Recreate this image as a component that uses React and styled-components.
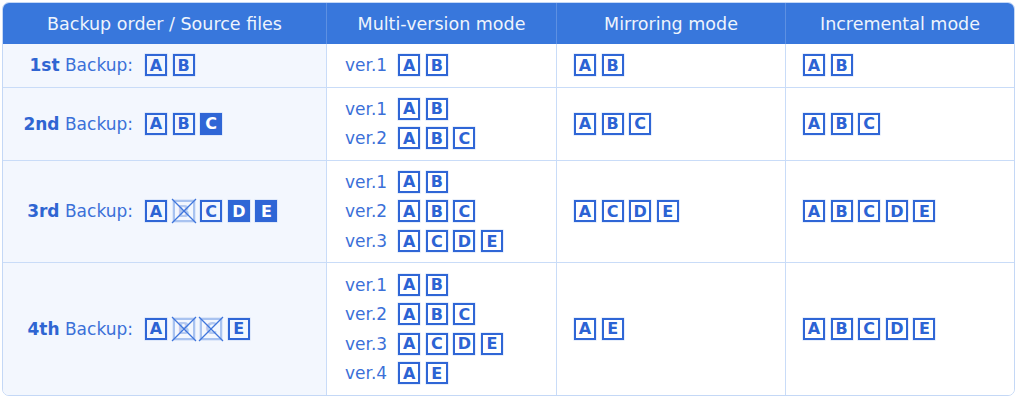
import styled, { createGlobalStyle } from "styled-components";

const GlobalStyle = createGlobalStyle`
    body {
        margin: 0;
        background: #ffffff;
        font-family: "DejaVu Sans", Verdana, sans-serif;
    }
`

const backups = [
    {
        ordinal: '1st',
        source: [{ l: 'A' }, { l: 'B' }],
        versions: [['A', 'B']],
        mirror: ['A', 'B'],
        incremental: ['A', 'B'],
    },
    {
        ordinal: '2nd',
        source: [{ l: 'A' }, { l: 'B' }, { l: 'C', state: 'new' }],
        versions: [['A', 'B'], ['A', 'B', 'C']],
        mirror: ['A', 'B', 'C'],
        incremental: ['A', 'B', 'C'],
    },
    {
        ordinal: '3rd',
        source: [{ l: 'A' }, { l: 'B', state: 'deleted' }, { l: 'C' }, { l: 'D', state: 'new' }, { l: 'E', state: 'new' }],
        versions: [['A', 'B'], ['A', 'B', 'C'], ['A', 'C', 'D', 'E']],
        mirror: ['A', 'C', 'D', 'E'],
        incremental: ['A', 'B', 'C', 'D', 'E'],
    },
    {
        ordinal: '4th',
        source: [{ l: 'A' }, { l: 'B', state: 'deleted' }, { l: 'C', state: 'deleted' }, { l: 'E' }],
        versions: [['A', 'B'], ['A', 'B', 'C'], ['A', 'C', 'D', 'E'], ['A', 'E']],
        mirror: ['A', 'E'],
        incremental: ['A', 'B', 'C', 'D', 'E'],
    },
]

const FileBox = ({ letter, state }) => (
    <Box $state={state}>
        {letter}
        {state === 'deleted' && (
            <Cross viewBox="0 0 26 26" width="26" height="26">
                <line x1="1" y1="1" x2="25" y2="25" stroke="#4076dc" strokeWidth="1.3" />
                <line x1="25" y1="1" x2="1" y2="25" stroke="#4076dc" strokeWidth="1.3" />
            </Cross>
        )}
    </Box>
)

const Files = ({ list }) => (
    <BoxRow>
        {list.map((f, i) =>
            typeof f === 'string'
                ? <FileBox key={i} letter={f} />
                : <FileBox key={i} letter={f.l} state={f.state} />
        )}
    </BoxRow>
)

const App = () => {
    return (
        <>
            <GlobalStyle />
            <Table>
                <HeadCell>Backup order / Source files</HeadCell>
                <HeadCell $sep>Multi-version mode</HeadCell>
                <HeadCell $sep>Mirroring mode</HeadCell>
                <HeadCell $sep>Incremental mode</HeadCell>

                {backups.map((b, r) => (
                    <Row key={b.ordinal}>
                        <OrderCell $top={r > 0}>
                            <Label><strong>{b.ordinal}</strong> Backup:</Label>
                            <Files list={b.source} />
                        </OrderCell>
                        <Cell $top={r > 0} $pad="18px">
                            <Versions>
                                {b.versions.map((v, i) => (
                                    <VersionLine key={i}>
                                        <VerText>ver.{i + 1}</VerText>
                                        <Files list={v} />
                                    </VersionLine>
                                ))}
                            </Versions>
                        </Cell>
                        <Cell $top={r > 0} $pad="17px">
                            <Files list={b.mirror} />
                        </Cell>
                        <Cell $top={r > 0} $pad="17px">
                            <Files list={b.incremental} />
                        </Cell>
                    </Row>
                ))}
            </Table>
        </>
    )
}

const Table = styled.div`
    margin: 2px;
    width: 1013px;
    box-sizing: border-box;
    border: 1px solid #c4d8f6;
    border-radius: 7px;
    overflow: hidden;
    display: grid;
    grid-template-columns: 323px 230px 229px 229px;
`

const HeadCell = styled.div`
    box-sizing: border-box;
    height: 41px;
    background: #3877dc;
    color: #eef4fd;
    font-size: 17.5px;
    display: flex;
    align-items: center;
    justify-content: center;
    border-left: ${p => p.$sep ? '1px solid #5d90e2' : 'none'};
`

const Row = styled.div`
    display: contents;
`

const Cell = styled.div`
    box-sizing: border-box;
    display: flex;
    align-items: center;
    padding: 10.25px 0 10.25px ${p => p.$pad};
    border-left: 1px solid #c9dcf8;
    border-top: ${p => p.$top ? '1px solid #c9dcf8' : 'none'};
    background: #ffffff;
`

const OrderCell = styled(Cell)`
    border-left: none;
    background: #f3f7fe;
    padding-left: 20px;
    gap: 12px;
`

const Label = styled.span`
    width: 110px;
    text-align: right;
    font-size: 17px;
    color: #3b70d8;
    white-space: nowrap;

    strong {
        color: #2f65d2;
        font-weight: 700;
    }
`

const Versions = styled.div`
    display: flex;
    flex-direction: column;
    gap: 7.6px;
`

const VersionLine = styled.div`
    display: flex;
    align-items: center;
    gap: 11px;
`

const VerText = styled.span`
    font-size: 17px;
    color: #3b70d8;
    white-space: nowrap;
`

const BoxRow = styled.div`
    display: flex;
    align-items: center;
    gap: 5.6px;
`

const Box = styled.span`
    position: relative;
    box-sizing: border-box;
    width: 22px;
    height: 22px;
    display: flex;
    align-items: center;
    justify-content: center;
    font-size: 16px;
    font-weight: 700;
    line-height: 1;
    padding-top: 1px;
    border: 2px solid ${p => p.$state === 'deleted' ? '#a9c3f0' : '#2f66d6'};
    background: ${p => p.$state === 'new' ? '#2f66d6' : 'transparent'};
    color: ${p => p.$state === 'new' ? '#ffffff' : p.$state === 'deleted' ? '#b4c9f0' : '#2c63d4'};
    box-shadow: 0 0 0 0.5px rgba(120, 160, 230, 0.35);
`

const Cross = styled.svg`
    position: absolute;
    left: -4px;
    top: -4px;
    pointer-events: none;
`

export default App;
